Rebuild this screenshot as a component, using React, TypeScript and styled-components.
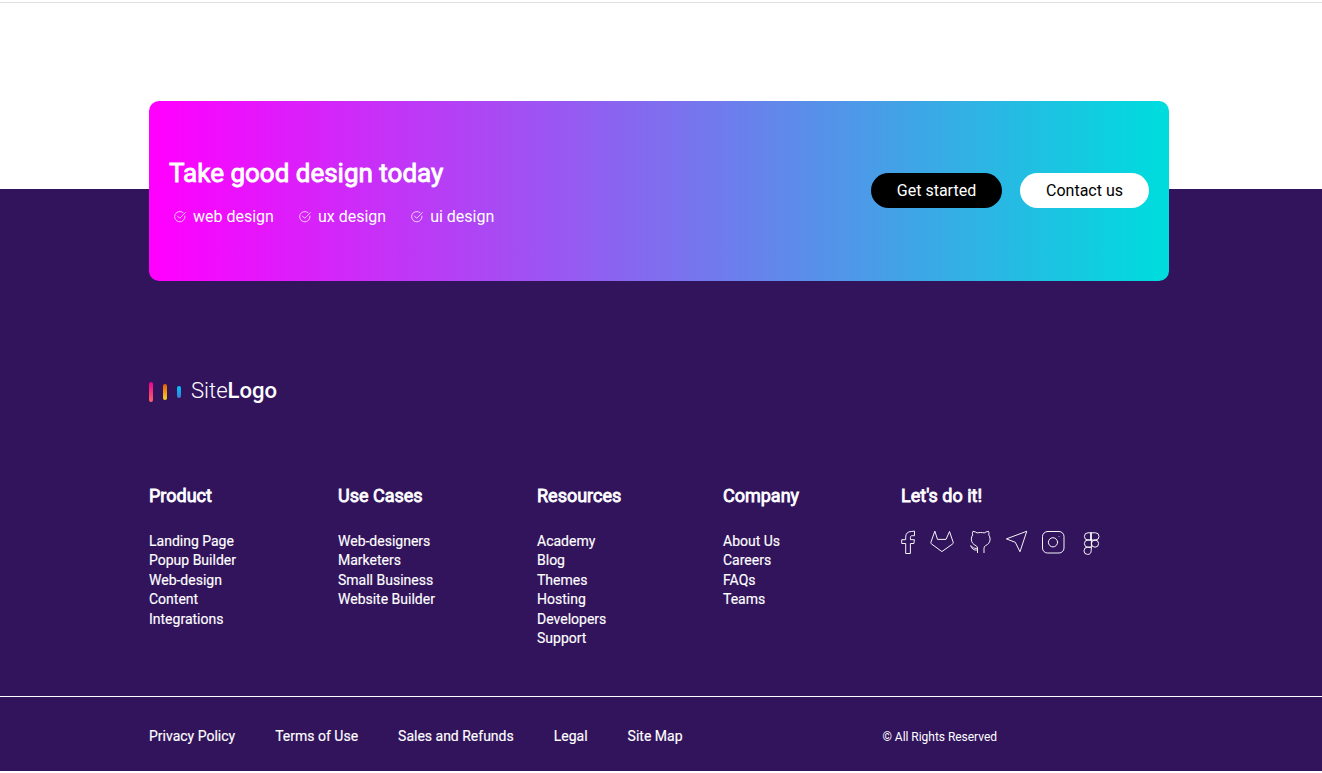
import React from "react";
import styled, { createGlobalStyle } from "styled-components";

const GlobalStyle = createGlobalStyle`
  *, *::before, *::after { box-sizing: border-box; }
  body { margin: 0; background: #fff; font-family: Roboto, sans-serif; color: #fff; }
  a { color: inherit; text-decoration: none; }
  ul { list-style: none; margin: 0; padding: 0; }
  h2, h3, p { margin: 0; }
`;

const Page = styled.div`
  height: 773px;
  padding-top: 2px;
  overflow: hidden;
`;

const TopRule = styled.div`
  height: 1px;
  background: #dfdfdf;
`;

const Footer = styled.footer`
  margin-top: 186px;
  height: 582px;
  background: #32145d;
`;

const FooterTop = styled.div`
  display: flex;
  height: 187px;
`;

const Container = styled.div`
  width: 1020px;
  margin-left: 149px;
`;

const Banner = styled.section`
  display: flex;
  align-items: center;
  justify-content: space-between;
  width: 1020px;
  height: 180px;
  padding: 0 20px 1px;
  margin: -88px 0 88px 149px;
  border-radius: 10px;
  background: linear-gradient(90deg, #ff00ff 1%, #00dbde 99%);
`;

const Pitch = styled.div`
  padding-top: 2px;
`;

const Title = styled.h2`
  font-size: 26px;
  line-height: 36px;
  font-weight: 400;
  white-space: nowrap;
  -webkit-text-stroke: 0.9px #fff;
`;

const Features = styled.ul`
  display: flex;
  gap: 25px;
  margin-top: 15px;
  padding-left: 5px;
`;

const Feature = styled.li`
  display: flex;
  align-items: center;
  gap: 7px;
  font-size: 16px;
  line-height: 22px;
  white-space: nowrap;
  svg { margin-top: -1px; }
`;

const Actions = styled.div`
  display: flex;
  gap: 18px;
`;

const Button = styled.a<{ $dark?: boolean; $width: number }>`
  width: ${(p) => p.$width}px;
  height: 35px;
  border-radius: 18px;
  background: ${(p) => (p.$dark ? "#000" : "#fff")};
  color: ${(p) => (p.$dark ? "#fff" : "#000")};
  font-size: 16px;
  line-height: 35px;
  text-align: center;
`;

const Logo = styled.a`
  display: flex;
  align-items: center;
  height: 28px;
  font-size: 22.1px;
  font-weight: 300;
  white-space: nowrap;
  svg { margin: 3px 10px 0 0; }
  b { font-weight: 500; }
`;

const Columns = styled.nav`
  display: grid;
  grid-template-columns: 189px 199px 186px 178px 1fr;
  margin-top: 80px;
  height: 212px;
`;

const Heading = styled.h3`
  font-size: 18px;
  line-height: 24px;
  font-weight: 400;
  white-space: nowrap;
  -webkit-text-stroke: 0.8px #fff;
`;

const Links = styled.ul`
  margin-top: 23.5px;
  font-size: 14px;
  line-height: 19.5px;
  -webkit-text-stroke: 0.15px #fff;
`;

const Socials = styled.div`
  display: flex;
  margin-top: 22px;
`;

const Bottom = styled.div`
  display: flex;
  align-items: center;
  height: 75px;
  padding: 4px 0 0 149px;
  border-top: 1px solid #fff;
  font-size: 14px;
  white-space: nowrap;
`;

const Legal = styled.nav`
  display: flex;
  gap: 40px;
  width: 733.5px;
  -webkit-text-stroke: 0.15px #fff;
`;

const Copyright = styled.p`
  padding-top: 2px;
  font-size: 12px;
  letter-spacing: -0.03px;
`;

const Check = () => (
  <svg width="12" height="12" viewBox="0 0 12 12" fill="none" stroke="#fff" strokeWidth="0.75" strokeLinecap="round">
    <path d="M9.1 1.6A5.2 5.2 0 1 0 11 5.1M3.5 5.1l2.2 2.2L11.4 1.6" />
  </svg>
);

const LogoMark = () => (
  <svg width="32" height="22" viewBox="0 0 32 22">
    <defs>
      <linearGradient id="pink" x1="0" y1="0" x2="0" y2="1"><stop stopColor="#ec008c" /><stop offset="1" stopColor="#fc6767" /></linearGradient>
      <linearGradient id="gold" x1="0" y1="0" x2="0" y2="1"><stop stopColor="#e65c00" /><stop offset="1" stopColor="#f9d423" /></linearGradient>
      <linearGradient id="blue" x1="0" y1="0" x2="0" y2="1"><stop stopColor="#00c6fb" /><stop offset="1" stopColor="#3a7bd5" /></linearGradient>
    </defs>
    <rect y="1" width="4" height="20" rx="2" fill="url(#pink)" />
    <rect x="14" y="3" width="4" height="16" rx="2" fill="url(#gold)" />
    <rect x="28" y="5" width="4" height="12" rx="2" fill="url(#blue)" />
  </svg>
);

const SocialIcons = () => (
  <svg width="202" height="26" viewBox="0 0 202 26" fill="none" stroke="#fff" strokeWidth="0.95" strokeLinejoin="round" strokeLinecap="round">
    {/* facebook */}
    <path d="M13.500 1.500v4.200h-2.300c-1.300 0-1.800.6-1.800 1.800v2.200h4l-.5 3.800H9.400v10H4.700v-10H.7V9.700h4V7c0-3.400 2-5.500 5.200-5.500z" />
    {/* gitlab */}
    <path d="M33.7 1.5 30 12c-.4 1.100-.1 1.500.6 2l10.300 7.600L51.500 14c.7-.5 1-.9.6-2L48.500 1.500 45 9.400h-8.100z" />
    {/* github */}
    <path d="M76.500 22.600v-4.400c0-1.100-.6-1.900-1.500-2.500-2.800-1.200-4.700-3.400-4.700-6.600 0-1.600.5-3 1.400-4.200-.4-1.300-.4-2.300.2-3.500 1.800.1 3.100.7 4.200 1.500 2.500-.5 4.700-.5 7.200 0 1.100-.8 2.400-1.400 4.200-1.500.6 1.200.6 2.200.2 3.500.9 1.200 1.400 2.600 1.400 4.200 0 3.200-1.900 5.400-4.700 6.600-.8.600-1.400 1.400-1.400 2.500v4.400M69.500 15.800c1.700.4 2.300 2 3.900 2.400 1.100.3 2.100.3 3.100 0M70.300 16.900c1 1.800 2 2.800 3.600 3.100.9.100 1.700.1 2.600-.1" />
    {/* telegram */}
    <path d="M125.400 1.400 105.400 8.900l8.900 3.400 4.500 9.100z" />
    {/* instagram */}
    <rect x="141.500" y="1.500" width="21.500" height="21.500" rx="5" />
    <circle cx="152" cy="12.300" r="4.600" />
    <path d="M158 6.500h.1" strokeWidth="0.7" />
    {/* figma */}
    <path d="M190 2.800h-3a3.600 3.600 0 0 0 0 7.200h3zM190 2.800h4.400a3.600 3.600 0 0 1 0 7.200H190zM190 10h-3a3.600 3.600 0 0 0 0 7.200h3zM194 10a3.600 3.600 0 1 1 0 7.200 3.600 3.600 0 0 1 0-7.200M190 17.200h-3.300a3.600 3.600 0 1 0 3.500 3.600z" />
  </svg>
);

const features = ["web design", "ux design", "ui design"];

const columns = [
  { title: "Product", links: ["Landing Page", "Popup Builder", "Web-design", "Content", "Integrations"] },
  { title: "Use Cases", links: ["Web-designers", "Marketers", "Small Business", "Website Builder"] },
  { title: "Resources", links: ["Academy", "Blog", "Themes", "Hosting", "Developers", "Support"] },
  { title: "Company", links: ["About Us", "Careers", "FAQs", "Teams"] },
];

const legalLinks = ["Privacy Policy", "Terms of Use", "Sales and Refunds", "Legal", "Site Map"];

export default function App() {
  return (
    <Page>
      <GlobalStyle />
      <TopRule />
      <Footer>
        <FooterTop>
          <Banner>
            <Pitch>
              <Title>Take good design today</Title>
              <Features>
                {features.map((f) => (
                  <Feature key={f}><Check />{f}</Feature>
                ))}
              </Features>
            </Pitch>
            <Actions>
              <Button href="#" $dark $width={131}>Get started</Button>
              <Button href="#" $width={129}>Contact us</Button>
            </Actions>
          </Banner>
        </FooterTop>
        <Container>
          <Logo href="#"><LogoMark /><span>Site<b>Logo</b></span></Logo>
          <Columns>
            {columns.map((c) => (
              <div key={c.title}>
                <Heading>{c.title}</Heading>
                <Links>{c.links.map((l) => <li key={l}><a href="#">{l}</a></li>)}</Links>
              </div>
            ))}
            <div>
              <Heading>Let's do it!</Heading>
              <Socials><SocialIcons /></Socials>
            </div>
          </Columns>
        </Container>
        <Bottom>
          <Legal>
            {legalLinks.map((l) => <a href="#" key={l}>{l}</a>)}
          </Legal>
          <Copyright>© All Rights Reserved</Copyright>
        </Bottom>
      </Footer>
    </Page>
  );
}
